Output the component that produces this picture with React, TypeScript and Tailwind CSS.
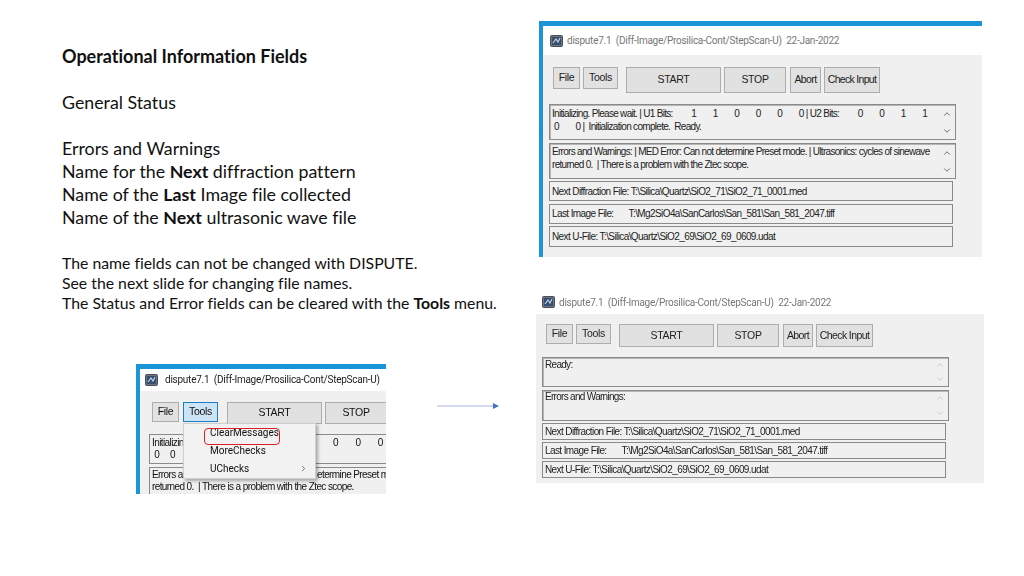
import { ChevronDown, ChevronRight, ChevronUp } from "lucide-react";
import type { ReactNode } from "react";

const AppIcon = () => (
  <svg width="13" height="12" viewBox="0 0 13 12" className="shrink-0">
    <rect x="0.5" y="0.5" width="12" height="11" rx="1" fill="#6d7480" stroke="#4a4f57" />
    <rect x="2" y="2" width="9" height="8" fill="#35506f" />
    <path d="M3 8 L6 4 L8 7 L10 3" stroke="#c5d0de" strokeWidth="1.2" fill="none" />
  </svg>
);

const Btn = ({ children, className }: { children: ReactNode; className: string }) => (
  <div className={`flex items-center justify-center border shrink-0 ${className}`}>{children}</div>
);

const plain = "border-[#adadad] bg-[#e1e1e1] tracking-[-0.3px]";

const TitleBar = ({ className, textClass, title }: { className: string; textClass: string; title: string }) => (
  <div className={`flex items-center bg-white font-['Roboto',sans-serif] text-[10px] tracking-[-0.25px] whitespace-pre ${className}`}>
    <AppIcon />
    <span className={textClass}>{title}</span>
  </div>
);

const TextBox = ({ lines, arrows, h, pt }: { lines: string[]; arrows: string; h: string; pt: string }) => (
  <div className={`flex w-[407px] border border-[#8a8a8a] shadow-[inset_1px_1px_0_#b5b5b5] ${h}`}>
    <div className={`flex-1 min-w-0 overflow-hidden pl-[2px] text-[10px] leading-[12.5px] tracking-[-0.7px] whitespace-pre ${pt}`}>
      {lines.map((l) => (
        <div key={l}>{l}</div>
      ))}
    </div>
    <div className="flex w-[14px] mr-[1px] shrink-0 flex-col items-center justify-around">
      <ChevronUp size={10} strokeWidth={2} className={arrows} />
      <ChevronDown size={10} strokeWidth={2} className={arrows} />
    </div>
  </div>
);

const FileField = ({ text, h }: { text: string; h: string }) => (
  <div className={`flex items-center w-[404px] border border-[#8a8a8a] pl-[2px] text-[10px] tracking-[-0.6px] whitespace-pre ${h}`}>
    {text}
  </div>
);

const fullTitle = "dispute7.1  (Diff-Image/Prosilica-Cont/StepScan-U)  22-Jan-2022";

export default function App() {
  return (
    <div className="flex w-[1024px] h-[576px] bg-white text-[#111] overflow-hidden">
      <div className="w-[536px] shrink-0 pl-[62px] pt-[45px] font-['Lato',sans-serif] [font-variant-ligatures:none]">
        <div className="text-[18px] leading-[23px] font-bold">Operational Information Fields</div>
        <div className="mt-[23px] text-[17.8px] leading-[23px]">General Status</div>
        <div className="mt-[23px] text-[17.8px] leading-[23px]">
          <div>Errors and Warnings</div>
          <div>
            Name for the <b>Next</b> diffraction pattern
          </div>
          <div>
            Name of the <b>Last</b> Image file collected
          </div>
          <div>
            Name of the <b>Next</b> ultrasonic wave file
          </div>
        </div>
        <div className="mt-[24px] text-[15.8px] leading-[20px]">
          <div>The name fields can not be changed with DISPUTE.</div>
          <div>See the next slide for changing file names.</div>
          <div>
            The Status and Error fields can be cleared with the <b>Tools</b> menu.
          </div>
        </div>

        <div className="flex items-start mt-[50.5px] -ml-[62px] pl-[136px]">
          <div className="relative w-[250px] h-[130px] shrink-0 overflow-hidden border-t-[5px] border-l-[4px] border-[#1a96d8] bg-[#f0f0f0] blur-[0.3px] font-['Liberation_Sans',sans-serif]">
            <TitleBar
              className="h-[22px] pl-[5px] gap-[7px]"
              textClass="text-[#222]"
              title="dispute7.1  (Diff-Image/Prosilica-Cont/StepScan-U)"
            />
            <div className="flex items-start pl-[12px] pt-[11px] text-[10.5px]">
              <Btn className={`w-[27px] h-[20px] ${plain}`}>File</Btn>
              <Btn className="w-[35px] h-[20px] ml-[4px] bg-[#cde4f7] border-[#1a7fc4] tracking-[-0.3px]">Tools</Btn>
              <Btn className={`w-[95px] h-[22px] ml-[9px] ${plain}`}>START</Btn>
              <Btn className={`w-[62px] h-[22px] ml-[3px] ${plain}`}>STOP</Btn>
            </div>
            <div className="pl-[9px] pt-[10px] text-[10px] tracking-[-0.6px] whitespace-pre">
              <div className="border border-[#8a8a8a] w-[300px] h-[30px] pl-[2px] pt-[2px] leading-[12.5px]">
                <div className="flex">
                  <span className="w-[181px]">Initializin</span>
                  <span>0        0        0</span>
                </div>
                <div> 0     0</div>
              </div>
              <div className="border border-[#8a8a8a] w-[300px] h-[30px] mt-[3px] pl-[2px] pt-[1px] leading-[12.5px]">
                <div className="flex">
                  <span className="w-[165px]">Errors ar</span>
                  <span>etermine Preset m</span>
                </div>
                <div>returned 0.  | There is a problem with the Ztec scope.</div>
              </div>
            </div>
            {/* dropdown hangs off the Tools button */}
            <div className="absolute left-[43px] top-[54px] w-[133px] h-[56px] bg-[#f2f2f2] border border-[#cfcfcf] shadow-[2px_2px_3px_rgba(0,0,0,0.3)] font-['Roboto',sans-serif] text-[10px] pl-[26px]">
              <div className="h-[18px] leading-[18px]">ClearMessages</div>
              <div className="h-[18px] leading-[18px]">MoreChecks</div>
              <div className="flex items-center justify-between h-[18px] pr-[7px]">
                UChecks
                <ChevronRight size={9} strokeWidth={1.5} />
              </div>
              <div className="absolute left-[20px] top-[4px] w-[76px] h-[17px] rounded-[4px] border-[1.5px] border-[#d8202a]" />
            </div>
          </div>
          <svg width="62" height="6" viewBox="0 0 62 6" className="ml-[51px] mt-[39px] shrink-0">
            <line x1="0" y1="3" x2="57" y2="3" stroke="#a9b4dc" strokeWidth="1" />
            <polygon points="56,0 62,3 56,6" fill="#4472c4" />
          </svg>
        </div>
      </div>

      <div className="shrink-0 font-['Liberation_Sans',sans-serif] text-[#222] blur-[0.3px]">
        <div className="ml-[3px] mt-[21px] w-[443px] h-[236px] border-t-[5px] border-l-[4px] border-[#1a96d8] bg-[#f0f0f0]">
          <TitleBar className="h-[29px] pl-[7px] gap-[4px]" textClass="text-[#777]" title={fullTitle} />
          <div className="flex items-start pl-[10px] pt-[12px] text-[10.5px]">
            <Btn className={`w-[27px] h-[22px] ${plain}`}>File</Btn>
            <Btn className={`w-[35px] h-[22px] ml-[3px] ${plain}`}>Tools</Btn>
            <Btn className={`w-[95px] h-[26px] ml-[8px] ${plain}`}>START</Btn>
            <Btn className={`w-[62px] h-[26px] ml-[3px] ${plain}`}>STOP</Btn>
            <Btn className="w-[31px] h-[26px] ml-[4px] border-[#adadad] bg-[#e1e1e1] tracking-[-0.6px]">Abort</Btn>
            <Btn className="w-[56px] h-[26px] ml-[3px] border-[#adadad] bg-[#e1e1e1] tracking-[-0.7px]">Check Input</Btn>
          </div>
          <div className="pl-[6px] pt-[11px] flex flex-col">
            <TextBox
              h="h-[36px]"
              pt="pt-[3px]"
              arrows="text-[#555]"
              lines={[
                "Initializing. Please wait. | U1 Bits:         1        1        0        0        0        0 | U2 Bits:         0        0        1        1",
                " 0        0 |  Initialization complete.  Ready.",
              ]}
            />
            <div className="mt-[3px]">
              <TextBox
                h="h-[36px]"
                pt="pt-[2px]"
                arrows="text-[#555]"
                lines={[
                  "Errors and Warnings: | MED Error: Can not determine Preset mode. | Ultrasonics: cycles of sinewave",
                  "returned 0.  | There is a problem with the Ztec scope.",
                ]}
              />
            </div>
            <div className="mt-[2px] flex flex-col gap-[2.5px]">
              <FileField h="h-[20px]" text="Next Diffraction File: T:\Silica\Quartz\SiO2_71\SiO2_71_0001.med" />
              <FileField h="h-[20px]" text="Last Image File:       T:\Mg2SiO4a\SanCarlos\San_581\San_581_2047.tiff" />
              <FileField h="h-[21px]" text="Next U-File: T:\Silica\Quartz\SiO2_69\SiO2_69_0609.udat" />
            </div>
          </div>
        </div>

        <div className="mt-[33px] w-[448px] h-[193px] bg-[#f0f0f0]">
          <TitleBar className="h-[24px] pl-[6px] gap-[4px]" textClass="text-[#777]" title={fullTitle} />
          <div className="flex items-start pl-[10px] pt-[10px] text-[10.5px]">
            <Btn className={`w-[27px] h-[20px] ${plain}`}>File</Btn>
            <Btn className={`w-[35px] h-[20px] ml-[3px] ${plain}`}>Tools</Btn>
            <Btn className={`w-[95px] h-[23px] ml-[8px] ${plain}`}>START</Btn>
            <Btn className={`w-[62px] h-[23px] ml-[3px] ${plain}`}>STOP</Btn>
            <Btn className="w-[30px] h-[23px] ml-[4px] border-[#adadad] bg-[#e1e1e1] tracking-[-0.6px]">Abort</Btn>
            <Btn className="w-[57px] h-[23px] ml-[3px] border-[#adadad] bg-[#e1e1e1] tracking-[-0.6px]">Check Input</Btn>
          </div>
          <div className="pl-[6px] pt-[10px] flex flex-col">
            <TextBox h="h-[30px]" pt="pt-[1px]" arrows="text-[#c4c4c4]" lines={["Ready:"]} />
            <div className="mt-[3px]">
              <TextBox h="h-[31px]" pt="pt-[0px]" arrows="text-[#c4c4c4]" lines={["Errors and Warnings:"]} />
            </div>
            <div className="mt-[2px] flex flex-col gap-[2px]">
              <FileField h="h-[17px]" text="Next Diffraction File: T:\Silica\Quartz\SiO2_71\SiO2_71_0001.med" />
              <FileField h="h-[17px]" text="Last Image File:       T:\Mg2SiO4a\SanCarlos\San_581\San_581_2047.tiff" />
              <FileField h="h-[17px]" text="Next U-File: T:\Silica\Quartz\SiO2_69\SiO2_69_0609.udat" />
            </div>
          </div>
        </div>
      </div>
    </div>
  );
}
